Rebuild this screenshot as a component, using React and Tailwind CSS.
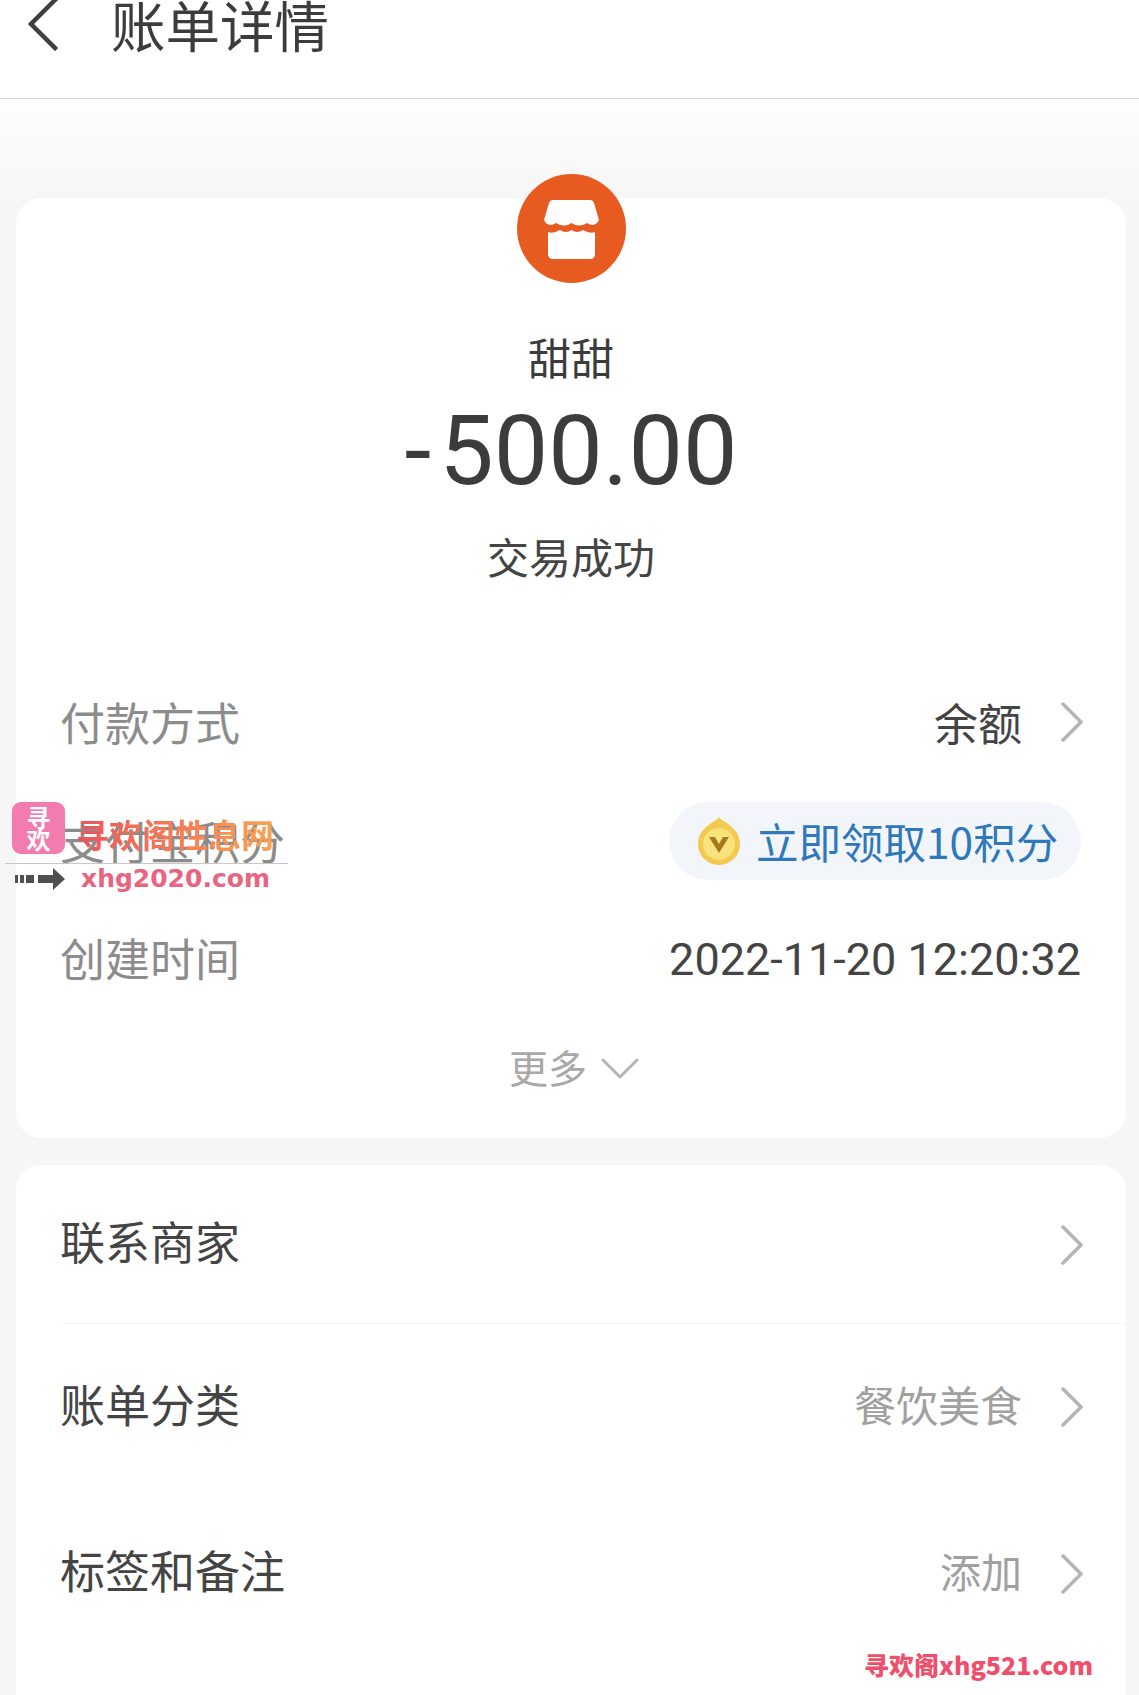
import React from 'react'

const cjk = '"Noto Sans CJK SC", "Liberation Sans", sans-serif'

function Chevron({ className = '' }) {
  return (
    <svg className={className} width="22" height="42" viewBox="0 0 22 42" fill="none">
      <path d="M2 3 L20 21 L2 39" stroke="#b4b4b4" strokeWidth="3.500" strokeLinecap="round" strokeLinejoin="round" />
    </svg>
  )
}

function Row({ label, value, valueClass = 'text-[44px] text-[#444]', labelClass = 'text-[#444]', chevronClass = '', className = '' }) {
  return (
    <div className={`flex items-center justify-between pl-[44px] pr-[43px] ${className}`}>
      <span className={`text-[45px] leading-[60px] ${labelClass}`}>{label}</span>
      <div className="flex items-center gap-[39px]">
        {value && <span className={`leading-[60px] ${valueClass}`}>{value}</span>}
        <Chevron className={chevronClass} />
      </div>
    </div>
  )
}

function Store() {
  return (
    <svg width="109" height="109" viewBox="0 0 109 109">
      <circle cx="54.5" cy="54.5" r="54.5" fill="#e75a20" />
      <path d="M36 26 H73 Q76 26 77 29 L82 46 Q78 54 70 49 Q62 54 54.500 49 Q47 54 39 49 Q31 54 27 46 L32 29 Q33 26 36 26 Z" fill="#fff" />
      <path d="M31 58 Q36 60 43 56 Q49 60 54.500 56 Q60 60 66 56 Q73 60 78 58 V80 Q78 85 73 85 H36 Q31 85 31 80 Z" fill="#fff" />
    </svg>
  )
}

function Coin() {
  return (
    <svg width="44" height="50" viewBox="0 0 44 50">
      <path d="M22 1 C25 6 43 11 43 28 C43 40 33 49 22 49 C11 49 1 40 1 28 C1 11 19 6 22 1 Z" fill="#f3c950" />
      <circle cx="22" cy="28" r="16" fill="#f8e27c" />
      <path d="M12 21 L22 37 L32 21 L26 21 L22 28 L18 21 Z" fill="#a57a1f" />
    </svg>
  )
}

export default function App() {
  return (
    <div className="relative w-[1139px] h-[1695px] overflow-hidden bg-white" style={{ fontFamily: cjk }}>
      <header className="h-[99px] border-b border-[#d2d2d2] bg-white">
        <div className="flex h-[48px] items-center pl-[27px]">
          <svg width="34" height="54" viewBox="0 0 34 54" fill="none">
            <path d="M28 3 L4 27 L28 51" stroke="#3f3f3f" strokeWidth="4.500" strokeLinecap="square" />
          </svg>
          <h1 className="ml-[50px] text-[54.500px] leading-[54px] text-[#3c3c3c]">账单详情</h1>
        </div>
      </header>

      <main className="h-[1596px] bg-gradient-to-b from-[#fdfdfd] to-[#f6f6f6] to-[100px] pl-[16px] pr-[13px] pt-[99px]">
        <section className="h-[940px] rounded-[26px] bg-white">
          <div className="flex flex-col items-center">
            <div className="-mt-[24px]"><Store /></div>
            <p className="mt-[47px] text-[43px] leading-[52px] text-[#3c3c3c]">甜甜</p>
            <p className="mt-[14px] flex items-center text-[97px] leading-[110px] text-[#3c3c3c]" style={{ fontFamily: 'Roboto, sans-serif' }}>
              <span className="mr-[8px]">-</span>500.00
            </p>
            <p className="mt-[24px] text-[42px] leading-[52px] text-[#444]">交易成功</p>
          </div>

          <div className="mt-[110px]">
            <Row label="付款方式" value="余额" labelClass="text-[#8c8c8c]" />
            <div className="mt-[50px] flex items-center justify-between pl-[44px] pr-[45px]">
              <span className="text-[45px] leading-[60px] text-[#8c8c8c]">支付宝积分</span>
              <div className="flex h-[78px] w-[412px] items-center rounded-full bg-[#f2f6fb] pl-[28px]">
                <Coin />
                <span className="ml-[15px] text-[42.500px] leading-[52px] text-[#2f78bb]">立即领取10积分</span>
              </div>
            </div>
            <div className="mt-[46px] flex items-center justify-between pl-[44px] pr-[45px]">
              <span className="text-[45px] leading-[60px] text-[#8c8c8c]">创建时间</span>
              <span className="mt-[4px] text-[45px] leading-[60px] text-[#444]" style={{ fontFamily: 'Roboto, sans-serif' }}>2022-11-20 12:20:32</span>
            </div>
            <div className="mt-[52px] ml-[6px] flex items-center justify-center gap-[14px]">
              <span className="text-[39px] leading-[48px] text-[#a8a8a8]">更多</span>
              <svg className="mt-[4px]" width="38" height="22" viewBox="0 0 38 22" fill="none">
                <path d="M2 3 L19 20 L36 3" stroke="#b4b4b4" strokeWidth="3" strokeLinecap="round" strokeLinejoin="round" />
              </svg>
            </div>
          </div>
        </section>

        <section className="mt-[27px] h-[600px] rounded-[26px] bg-white pt-[46px]">
          <Row label="联系商家" chevronClass="mt-[8px]" />
          <div className="ml-[44px] mt-[52px] border-t border-[#f5f5f5]" />
          <Row label="账单分类" value="餐饮美食" valueClass="text-[42px] text-[#a0a0a0]" chevronClass="mt-[6px]" className="mt-[50px]" />
          <Row label="标签和备注" value="添加" valueClass="text-[41px] text-[#a0a0a0]" chevronClass="mt-[8px]" className="mt-[106px]" />
        </section>
      </main>

      {/* watermarks on top of the page */}
      <div className="absolute left-[12px] top-[802px] flex h-[52px] w-[53px] items-center justify-center rounded-[9px] bg-[#f27bb0] text-[24px] leading-[22px] font-bold text-white text-center">寻<br />欢</div>
      <span className="absolute left-[76px] top-[812px] whitespace-nowrap bg-gradient-to-r from-[#f0505a] to-[#f9a24e] bg-clip-text text-[33px] leading-[44px] font-bold text-transparent">寻欢阁性息网</span>
      <div className="absolute left-[5px] top-[863px] w-[283px] border-t border-[#c8c8c8]" />
      <svg className="absolute left-[15px] top-[868px]" width="50" height="22" viewBox="0 0 50 22">
        <path d="M0 7h3v8H0zM5 7h4v8H5zM11 7h8v8h-8zM23 7h15V0l12 11-12 11v-7H23z" fill="#505050" />
      </svg>
      <span className="absolute left-[81px] top-[861px] text-[25px] leading-[36px] font-bold text-[#e8657f]" style={{ fontFamily: '"DejaVu Sans", sans-serif' }}>xhg2020.com</span>
      <span className="absolute left-[864px] top-[1648px] whitespace-nowrap text-[25px] leading-[32px] font-black text-[#f04f6b]">寻欢阁xhg521.com</span>
    </div>
  )
}
